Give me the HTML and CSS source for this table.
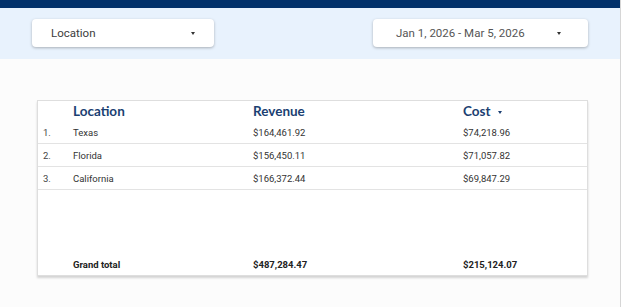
FILE: index.html
```html
<!DOCTYPE html>
<html>
<head>
<meta charset="utf-8">
<link rel="stylesheet" href="styles.css">
</head>
<body>
<div class="page">
  <div class="topbar"></div>
  <div class="filters">
    <div class="dropdown dd-location">
      <span class="dd-label">Location</span>
      <span class="caret"></span>
    </div>
    <div class="dropdown dd-date">
      <span class="dd-label">Jan 1, 2026 - Mar 5, 2026</span>
      <span class="caret"></span>
    </div>
  </div>
  <div class="content">
    <div class="card">
      <div class="row head">
        <span></span>
        <span class="th">Location</span>
        <span class="th">Revenue</span>
        <span class="th">Cost <span class="caret small"></span></span>
      </div>
      <div class="row data">
        <span class="idx">1.</span><span>Texas</span><span>$164,461.92</span><span>$74,218.96</span>
      </div>
      <div class="row data">
        <span class="idx">2.</span><span>Florida</span><span>$156,450.11</span><span>$71,057.82</span>
      </div>
      <div class="row data">
        <span class="idx">3.</span><span>California</span><span>$166,372.44</span><span>$69,847.29</span>
      </div>
      <div class="spacer"></div>
      <div class="row total">
        <span></span><span>Grand total</span><span>$487,284.47</span><span>$215,124.07</span>
      </div>
    </div>
  </div>
</div>
</body>
</html>
```

FILE: styles.css
```css
html, body {
  margin: 0;
  padding: 0;
  background: #ffffff;
}
.page {
  width: 620px;
  height: 307px;
  border-right: 1px solid #d6d6d6;
  background: #fcfcfc;
  font-family: Roboto, "Liberation Sans", sans-serif;
  overflow: hidden;
}
.topbar {
  height: 8px;
  background: #02316b;
}
.filters {
  height: 51px;
  background: #e8f2fd;
  box-sizing: border-box;
  padding-top: 11px;
  display: flex;
}
.dropdown {
  height: 28px;
  box-sizing: border-box;
  background: #ffffff;
  border-radius: 4px;
  box-shadow: 0 1px 3px rgba(0, 0, 0, 0.28);
  display: flex;
  align-items: center;
  justify-content: space-between;
  color: #3c3c3c;
  font-size: 11.5px;
}
.dd-location {
  margin-left: 32px;
  width: 182px;
  padding-left: 19px;
  padding-right: 19px;
}
.dd-date {
  margin-left: 159px;
  width: 215px;
  padding-left: 23px;
  padding-right: 27px;
  color: #555555;
}
.caret {
  display: inline-block;
  width: 0;
  height: 0;
  border-left: 2.5px solid transparent;
  border-right: 2.5px solid transparent;
  border-top: 3px solid #333333;
}
.content {
  padding-top: 41px;
  padding-left: 37px;
}
.card {
  width: 551px;
  height: 176px;
  box-sizing: border-box;
  background: #ffffff;
  border: 1px solid #dedede;
  box-shadow: 0 2px 2px rgba(0, 0, 0, 0.16);
  display: flex;
  flex-direction: column;
}
.row {
  display: grid;
  grid-template-columns: 30px 180px 210px 1fr;
  padding-left: 5px;
  align-items: center;
}
.head {
  height: 20px;
  font-family: Lato, "Open Sans", sans-serif;
  font-weight: 700;
  font-size: 13.5px;
  color: #1b3f72;
}
.th .caret.small {
  margin-left: 4px;
  vertical-align: middle;
  border-top-color: #1b3f72;
}
.data {
  height: 22px;
  font-size: 9.5px;
  color: #333333;
  border-bottom: 1px solid #e3e3e3;
}
.idx {
  color: #444444;
}
.spacer {
  flex: 1;
}
.total {
  height: 22px;
  font-size: 9.5px;
  font-weight: 700;
  color: #222222;
}
```
